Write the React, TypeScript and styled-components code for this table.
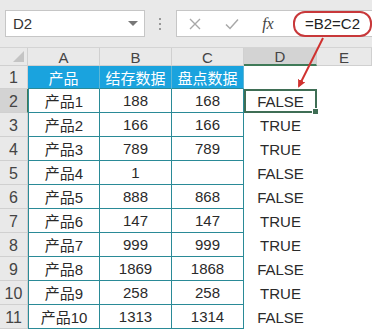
import styled, { createGlobalStyle, css } from "styled-components"

const GlobalStyle = createGlobalStyle`
    html, body {
        margin: 0;
        padding: 0;
        background: #ffffff;
    }
    body {
        font-family: "Liberation Sans", "Noto Sans CJK SC", sans-serif;
    }
`

const Page = styled.div`
    position: relative;
    width: 372px;
    height: 331px;
    overflow: hidden;
    background: #fff;
`

const FormulaBar = styled.div`
    display: flex;
    align-items: center;
    height: 48px;
    padding-left: 5px;
    box-sizing: border-box;
    background: #e9e9e9;
    border-bottom: 1px solid #d4d4d4;
`

const NameBox = styled.div`
    display: flex;
    align-items: center;
    justify-content: space-between;
    width: 140px;
    height: 27px;
    box-sizing: border-box;
    padding: 0 6px 0 7px;
    background: #fff;
    border: 1px solid #c6c6c6;
    font-size: 15px;
    color: #333;
`

const DropArrow = styled.span`
    width: 0;
    height: 0;
    border-left: 5px solid transparent;
    border-right: 5px solid transparent;
    border-top: 5px solid #777;
`

const Grip = styled.div`
    width: 31px;
    display: flex;
    flex-direction: column;
    align-items: center;
    gap: 3px;
    span {
        width: 2px;
        height: 2px;
        background: #999;
    }
`

const FormulaBox = styled.div`
    flex: 1;
    display: flex;
    align-items: center;
    height: 27px;
    box-sizing: border-box;
    background: #fff;
    border: 1px solid #c6c6c6;
    border-right: none;
`

const ToolIcon = styled.span<{ $w: number }>`
    width: ${p => p.$w}px;
    display: flex;
    justify-content: center;
    color: #a8a8a8;
`

const Fx = styled.span`
    width: 34px;
    text-align: center;
    font-family: "Liberation Serif", serif;
    font-style: italic;
    font-size: 16px;
    color: #444;
`

const Formula = styled.span`
    margin-left: 8px;
    padding: 1px 10px 1px 10px;
    border: 2px solid #c8383a;
    border-radius: 12px;
    font-size: 15px;
    color: #222;
    line-height: 20px;
`

const Sheet = styled.div`
    display: grid;
    grid-template-columns: 28px 72px 72px 72px 73px 1fr;
    grid-template-rows: 18px 23px repeat(10, 24px);
`

type Kind = "corner" | "colHead" | "rowHead" | "title" | "data" | "plain"

const Cell = styled.div<{ $kind: Kind; $active?: boolean; $selected?: boolean; $first?: boolean }>`
    position: relative;
    display: flex;
    align-items: center;
    justify-content: center;
    box-sizing: border-box;
    font-size: 15px;
    color: #2a2a2a;
    font-family: "Liberation Sans", "Noto Sans CJK SC", sans-serif;
    ${p => p.$kind === "corner" && css`
        background: #e9e9e9;
        border-right: 1px solid #d0d0d0;
        border-bottom: 1px solid #d0d0d0;
        &::after {
            content: '';
            position: absolute;
            right: 3px;
            bottom: 3px;
            border-left: 11px solid transparent;
            border-bottom: 11px solid #c4c4c4;
        }
    `}
    ${p => p.$kind === "colHead" && css`
        background: ${p.$active ? "#d3d3d3" : "#e9e9e9"};
        border-right: 1px solid #d0d0d0;
        border-bottom: ${p.$active ? "2px solid #3f7a58" : "1px solid #d0d0d0"};
        color: #444;
        padding-top: 1px;
    `}
    ${p => p.$kind === "rowHead" && css`
        background: ${p.$active ? "#d3d3d3" : "#e9e9e9"};
        border-right: 1px solid ${p.$active ? "#3f7a58" : "#d0d0d0"};
        border-bottom: 1px solid #d0d0d0;
        color: #444;
        align-items: flex-end;
        padding-bottom: 1px;
        font-size: 16px;
    `}
    ${p => p.$kind === "title" && css`
        background: #1aa3de;
        color: #fff;
        font-family: "Noto Sans CJK SC", sans-serif;
        font-size: 15px;
        border-right: 1px solid #5fb7d6;
        border-bottom: 1px solid #2a8a97;
    `}
    ${p => p.$kind === "data" && css`
        border-right: 1px solid #2a8a97;
        border-bottom: 1px solid #2a8a97;
        border-left: ${p.$first ? "1px solid #2a8a97" : "none"};
    `}
    ${p => p.$selected && css`
        border: 2px solid #3f6e55;
        &::after {
            content: '';
            position: absolute;
            right: -4px;
            bottom: -4px;
            width: 5px;
            height: 5px;
            background: #3f6e55;
            border: 1px solid #fff;
        }
    `}
`

const Pin = styled.svg`
    position: absolute;
    left: 0;
    top: 0;
    pointer-events: none;
`

const columns = ["A", "B", "C", "D", "E"]

const rows: [string, string, string, string][] = [
    ["产品1", "188", "168", "FALSE"],
    ["产品2", "166", "166", "TRUE"],
    ["产品3", "789", "789", "TRUE"],
    ["产品4", "1", "", "FALSE"],
    ["产品5", "888", "868", "FALSE"],
    ["产品6", "147", "147", "TRUE"],
    ["产品7", "999", "999", "TRUE"],
    ["产品8", "1869", "1868", "FALSE"],
    ["产品9", "258", "258", "TRUE"],
    ["产品10", "1313", "1314", "FALSE"],
]

const Row = ({ n, cells }: { n: number; cells: [string, string, string, string] }) => {
    return (
        <>
            <Cell $kind="rowHead" $active={n === 2}>{n}</Cell>
            <Cell $kind="data" $first>{cells[0]}</Cell>
            <Cell $kind="data">{cells[1]}</Cell>
            <Cell $kind="data">{cells[2]}</Cell>
            <Cell $kind="plain" $selected={n === 2}>{cells[3]}</Cell>
            <Cell $kind="plain" />
        </>
    )
}

const App = () => {
    return (
        <Page>
            <GlobalStyle />
            <FormulaBar>
                <NameBox>
                    D2
                    <DropArrow />
                </NameBox>
                <Grip><span /><span /><span /></Grip>
                <FormulaBox>
                    <ToolIcon $w={36}>
                        <svg width="12" height="12" viewBox="0 0 12 12">
                            <path d="M1 1L11 11M11 1L1 11" stroke="#a8a8a8" strokeWidth="1.4" />
                        </svg>
                    </ToolIcon>
                    <ToolIcon $w={38}>
                        <svg width="14" height="12" viewBox="0 0 14 12">
                            <path d="M1 6.5L5 10.5L13 1.5" stroke="#a8a8a8" strokeWidth="1.5" fill="none" />
                        </svg>
                    </ToolIcon>
                    <Fx>fx</Fx>
                    <Formula>=B2=C2</Formula>
                </FormulaBox>
            </FormulaBar>

            <Sheet>
                <Cell $kind="corner" />
                {columns.map(c => (
                    <Cell key={c} $kind="colHead" $active={c === "D"}>{c}</Cell>
                ))}

                <Cell $kind="rowHead">1</Cell>
                <Cell $kind="title">产品</Cell>
                <Cell $kind="title">结存数据</Cell>
                <Cell $kind="title">盘点数据</Cell>
                <Cell $kind="plain" />
                <Cell $kind="plain" />

                {rows.map((r, i) => (
                    <Row key={i} n={i + 2} cells={r} />
                ))}
            </Sheet>

            <Pin width="372" height="331" viewBox="0 0 372 331">
                <defs>
                    <marker id="head" markerWidth="8" markerHeight="8" refX="6" refY="4" orient="auto" markerUnits="userSpaceOnUse">
                        <path d="M0 0L8 4L0 8Z" fill="#d0312f" />
                    </marker>
                </defs>
                <line x1="323" y1="38" x2="299" y2="86" stroke="#d0312f" strokeWidth="2" markerEnd="url(#head)" />
            </Pin>
        </Page>
    )
}

export default App
